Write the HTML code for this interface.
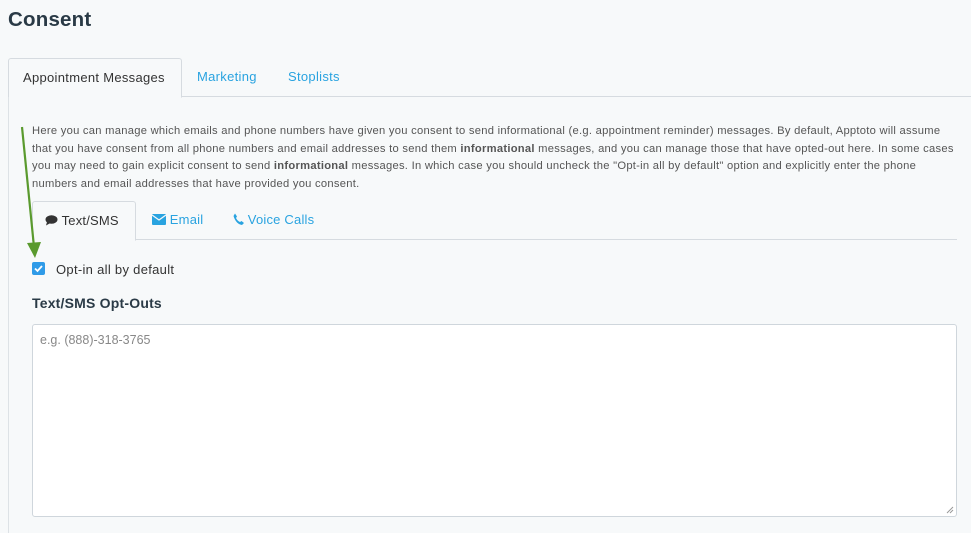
<!DOCTYPE html>
<html><head><style>
body{margin:0;background:#f7f9fa;font-family:"Liberation Sans",sans-serif;color:#333;width:971px;height:533px;overflow:hidden;position:relative}
h1{position:absolute;left:8px;top:8px;margin:0;font-size:20.5px;font-weight:bold;color:#2a3a46;letter-spacing:0.2px}
.tabs{position:absolute;left:8px;top:58px;right:0;height:38px;border-bottom:1px solid #d6dbe0}
.tab{position:absolute;top:0;height:38px;line-height:38px;font-size:13px;color:#29a3e0;letter-spacing:0.3px}
.tab.act{border:1px solid #d6dbe0;border-bottom:1px solid #f7f9fa;border-radius:3px 3px 0 0;background:#f7f9fa;color:#333;padding:0 14px;width:144px;height:38px}
.panel{position:absolute;left:8px;top:97px;width:2px;bottom:0;border-left:1px solid #dde2e6}
.desc{position:absolute;left:32px;top:123px;width:940px;font-size:11.2px;letter-spacing:0.27px;line-height:17.5px;color:#555;white-space:nowrap}
.itabs{position:absolute;left:32px;top:201px;width:925px;height:38px;border-bottom:1px solid #d6dbe0}
.it{position:absolute;top:0;height:38px;line-height:38px;font-size:13px;color:#29a3e0;letter-spacing:0.2px}
.it.act{border:1px solid #d6dbe0;border-bottom:1px solid #f7f9fa;border-radius:3px 3px 0 0;color:#333;padding:0 12px;left:0;background:#f7f9fa;width:78px}
.cb{position:absolute;left:32px;top:262px;width:13px;height:13px;background:#2f9be8;border-radius:2px}
.lbl{position:absolute;left:56px;top:262px;font-size:13px;color:#333;letter-spacing:0.3px}
h3{position:absolute;left:32px;top:295px;margin:0;font-size:14px;font-weight:bold;color:#2a3a46;letter-spacing:0.2px}
.ta{position:absolute;left:32px;top:324px;width:923px;height:191px;background:#fff;border:1px solid #cfd6dc;border-radius:3px}
.ph{position:absolute;left:7px;top:8px;font-size:12.5px;color:#888}
</style></head><body>
<h1>Consent</h1>
<div class="tabs">
<div class="tab act" style="left:0">Appointment Messages</div>
<div class="tab" style="left:189px">Marketing</div>
<div class="tab" style="left:280px">Stoplists</div>
</div>
<div class="panel"></div>
<div class="desc">Here you can manage which emails and phone numbers have given you consent to send informational (e.g. appointment reminder) messages. By default, Apptoto will assume<br>that you have consent from all phone numbers and email addresses to send them <b>informational</b> messages, and you can manage those that have opted-out here. In some cases<br>you may need to gain explicit consent to send <b>informational</b> messages. In which case you should uncheck the "Opt-in all by default" option and explicitly enter the phone<br>numbers and email addresses that have provided you consent.</div>
<div class="itabs">
<div class="it act"><svg width="13" height="11" viewBox="0 0 13 11" style="vertical-align:-1px"><ellipse cx="6.5" cy="4.5" rx="6" ry="4.3" fill="#333"/><path d="M2 7 L1 10.5 L5 8.3Z" fill="#333"/></svg> Text/SMS</div>
<div class="it" style="left:120px"><svg width="14" height="11" viewBox="0 0 14 11" style="vertical-align:-1px"><rect x="0" y="0" width="14" height="11" rx="1" fill="#29a3e0"/><path d="M0 1 L7 6 L14 1" stroke="#f7f9fa" stroke-width="1.3" fill="none"/></svg> Email</div>
<div class="it" style="left:201px"><svg width="11" height="12" viewBox="0 0 11 12" style="vertical-align:-1px"><path d="M2 0.5 L4 3.5 L3 5 Q4.5 8 7 9 L8.5 8 L11 10 L9 12 Q3 11 0.5 3 Z" fill="#29a3e0"/></svg> Voice Calls</div>
</div>
<div class="cb"><svg width="13" height="13" viewBox="0 0 13 13"><path d="M3 6.5 L5.5 9 L10 4" stroke="#fff" stroke-width="1.8" fill="none"/></svg></div>
<div class="lbl">Opt-in all by default</div>
<h3>Text/SMS Opt-Outs</h3>
<div class="ta"><div class="ph">e.g. (888)-318-3765</div>
<svg style="position:absolute;right:2px;bottom:2px" width="8" height="8"><path d="M1 7 L7 1 M4 7 L7 4" stroke="#999"/></svg></div>
<svg style="position:absolute;left:0;top:0" width="60" height="280"><path d="M22 127 L34 247" stroke="#5a9a2e" stroke-width="2.2"/><path d="M27 243 L41 242 L35 258Z" fill="#5a9a2e"/></svg>
</body></html>
